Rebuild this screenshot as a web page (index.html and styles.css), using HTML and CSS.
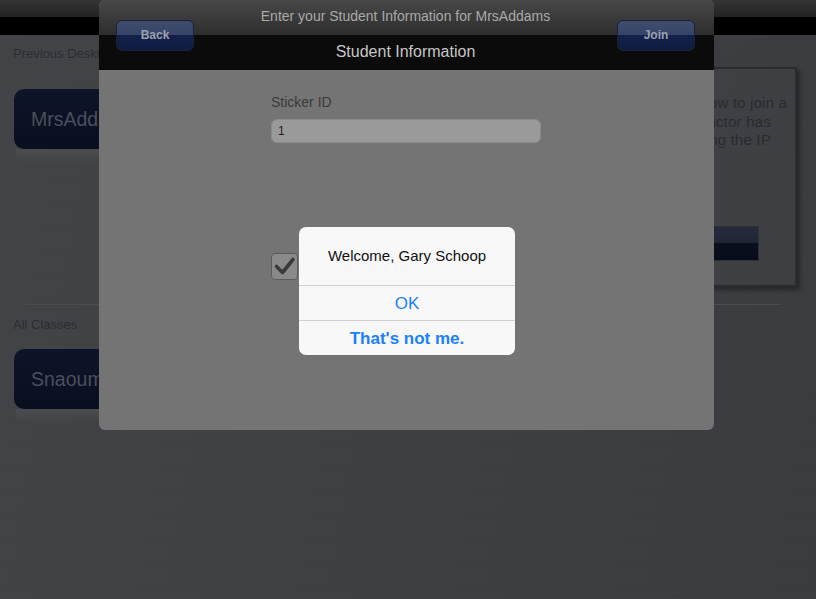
FILE: index.html
```html
<!DOCTYPE html>
<html>
<head>
<meta charset="utf-8">
<title>Student Information</title>
<link rel="stylesheet" href="styles.css">
</head>
<body>
<div class="screen">
  <div class="topbar"></div>
  <div class="main">
    <div class="col-left">
      <div class="section-label">Previous Desktops</div>
      <div class="class-btn">MrsAddams</div>
      <div class="reflect"></div>
      <div class="divider"></div>
      <div class="section-label all">All Classes</div>
      <div class="class-btn">Snaoum Class</div>
      <div class="reflect"></div>
    </div>
    <div class="col-right">
      <div class="info-box">
        <div class="info-text">
          <div class="line l1">If you do not know how to join a</div>
          <div class="line">class, ask your instructor. If your instructor has</div>
          <div class="line">given you an address, try using the IP</div>
        </div>
        <div class="info-btn">Info</div>
      </div>
      <div class="divider right"></div>
    </div>
  </div>

  <div class="modal">
    <div class="modal-head">
      <div class="nav-btn">Back</div>
      <div class="titles">
        <div class="prompt">Enter your Student Information for MrsAddams</div>
        <div class="title">Student Information</div>
      </div>
      <div class="nav-btn">Join</div>
    </div>
    <div class="modal-body">
      <div class="form">
        <div class="field-label">Sticker ID</div>
        <div class="field">1</div>
        <div class="remember">
          <div class="checkbox">
            <svg width="27" height="27" viewBox="0 0 27 27"><path d="M5.5 13.5 L11.5 19.5 L22 6.5" fill="none" stroke="#3a3a3a" stroke-width="3.6" stroke-linecap="round" stroke-linejoin="round"/></svg>
          </div>
          <span class="remember-text">Remember Me</span>
        </div>
      </div>
    </div>
  </div>

  <div class="alert">
    <div class="alert-title">Welcome, Gary Schoop</div>
    <div class="alert-btn">OK</div>
    <div class="alert-btn bold">That's not me.</div>
  </div>
</div>
</body>
</html>
```

FILE: styles.css
```css
html, body {
  margin: 0;
  padding: 0;
  overflow: hidden;
}
body {
  font-family: "Liberation Sans", Arial, sans-serif;
  background: #3e3f43;
}
.screen {
  position: relative;
  width: 816px;
  height: 599px;
  overflow: hidden;
  background:
    repeating-linear-gradient(0deg, rgba(255,255,255,0.012) 0 1px, transparent 1px 3px),
    linear-gradient(100deg, #424347 0%, #3e3f43 50%, #3a3b3f 100%);
}
.topbar {
  height: 35px;
  background: linear-gradient(#353535 0, #222222 17px, #000000 17px, #000000 35px);
}
.main {
  display: flex;
  padding: 0 19px 0 13px;
}
.col-left {
  width: 470px;
  display: flex;
  flex-direction: column;
  padding-top: 11px;
}
.section-label {
  font-size: 13px;
  line-height: 16px;
  height: 16px;
  color: #2c2d31;
}
.section-label.all {
  margin-top: 12px;
}
.class-btn {
  margin: 27px 0 0 1px;
  width: 220px;
  height: 60px;
  border-radius: 10px;
  background: linear-gradient(#0e1428, #0a0f1f);
  color: #4a4f5b;
  font-size: 19.5px;
  line-height: 60px;
  padding-left: 17px;
  box-sizing: border-box;
  white-space: nowrap;
}
.section-label.all + .class-btn {
  margin-top: 16px;
}
.reflect {
  margin-left: 3px;
  width: 214px;
  height: 14px;
  background: linear-gradient(rgba(255,255,255,0.05), rgba(255,255,255,0));
  border-radius: 0 0 8px 8px;
}
.divider {
  margin: 141px 0 0 12px;
  height: 1px;
  background: #4c4d51;
}
.col-right {
  flex: 1;
  display: flex;
  flex-direction: column;
  margin-left: 14px;
}
.info-box {
  margin-top: 32px;
  height: 220px;
  box-sizing: border-box;
  border: 2px solid #2b2c2f;
  box-shadow: 3px 3px 4px rgba(0,0,0,0.35);
  background: linear-gradient(100deg, #424347, #3e3f43);
  display: flex;
  flex-direction: column;
  padding: 25px 8px 0 10px;
}
.info-text {
  font-size: 15.5px;
  line-height: 18.5px;
  color: #2a2b2f;
  text-align: right;
}
.line {
  white-space: nowrap;
  padding-right: 16px;
}
.line.l1 {
  padding-right: 0;
}
.info-btn {
  margin: 76px 28px 0 auto;
  width: 120px;
  height: 35px;
  box-sizing: border-box;
  border: 1px solid #2e3035;
  background: linear-gradient(#262b3b 0, #1f2536 50%, #0a0f1e 50%, #080c1a 100%);
  color: #5a5f6c;
  font-size: 13px;
  font-weight: bold;
  line-height: 33px;
  text-align: center;
}
.divider.right {
  margin: 17px 17px 0 8px;
}

/* modal */
.modal {
  position: absolute;
  left: 99px;
  top: 0;
  width: 615px;
  height: 430px;
  border-radius: 6px;
  overflow: hidden;
  background: #747474;
  display: flex;
  flex-direction: column;
}
.modal-head {
  height: 70px;
  flex: none;
  display: flex;
  align-items: center;
  padding: 0 19px 0 17px;
  background: linear-gradient(#484848 0, #2d2d2d 35px, #0b0b0b 35px, #0b0b0b 70px);
}
.nav-btn {
  width: 78px;
  height: 31px;
  flex: none;
  box-sizing: border-box;
  border: 1px solid #1c2233;
  border-radius: 6px;
  background: linear-gradient(#3f4c6c 0, #36446a 50%, #14204a 50%, #111c44 100%);
  color: #9ca1ad;
  font-size: 12px;
  font-weight: bold;
  line-height: 29px;
  text-align: center;
}
.titles {
  flex: 1;
  display: flex;
  flex-direction: column;
  align-items: center;
  align-self: stretch;
}
.prompt {
  height: 35px;
  line-height: 33px;
  font-size: 14px;
  color: #a9a9a9;
  white-space: nowrap;
}
.title {
  height: 35px;
  line-height: 33px;
  font-size: 16px;
  color: #c6c6c6;
}
.modal-body {
  flex: 1;
  display: flex;
  justify-content: center;
}
.form {
  width: 270px;
  padding-top: 24px;
  margin-left: -1px;
}
.field-label {
  font-size: 14px;
  line-height: 16px;
  color: #3a3a3a;
}
.field {
  margin-top: 9px;
  height: 24px;
  box-sizing: border-box;
  border: 1px solid #8a8a8a;
  border-radius: 6px;
  background: #9a9a9a;
  font-size: 12px;
  line-height: 22px;
  padding-left: 6px;
  color: #1e1e1e;
}
.remember {
  margin-top: 110px;
  display: flex;
  align-items: center;
  gap: 17px;
}
.checkbox {
  width: 27px;
  height: 27px;
  box-sizing: border-box;
  border: 1px solid #5c5c5c;
  border-radius: 4px;
  background: #8a8a8a;
  display: flex;
  align-items: center;
  justify-content: center;
}
.checkbox svg {
  display: block;
  margin: -1px;
}
.remember-text {
  font-size: 15px;
  color: #4a4a4a;
  margin-top: 2px;
}

/* alert */
.alert {
  position: absolute;
  left: 299px;
  top: 227px;
  width: 216px;
  border-radius: 7px;
  overflow: hidden;
  background: rgba(255,255,255,0.95);
  display: flex;
  flex-direction: column;
}
.alert-title {
  height: 58px;
  line-height: 57px;
  text-align: center;
  font-size: 15px;
  color: #111111;
}
.alert-btn {
  height: 34px;
  line-height: 36px;
  text-align: center;
  font-size: 17px;
  color: #1a80fb;
  border-top: 1px solid #cfcfcf;
}
.alert-btn.bold {
  font-weight: bold;
}
```
